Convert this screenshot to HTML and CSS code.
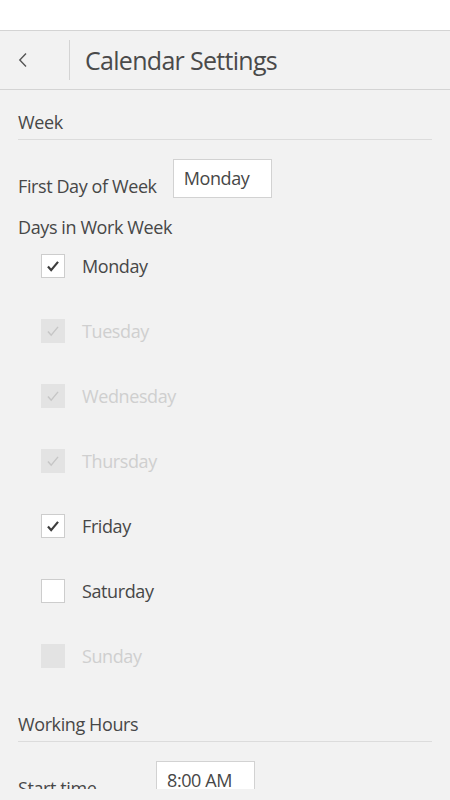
FILE: index.html
```html
<html lang="en">
  <head>
    <title>Calendar Settings</title>
    <meta charset="utf-8">
    <meta name="viewport" content="width=device-width, initial-scale=1.0">
    <link rel="stylesheet" href="styles.css">
  </head>
  <body>
    <div class="status"></div>

    <header class="topbar">
      <button class="topbar__back" aria-label="Back">
        <svg width="10" height="16" viewBox="0 0 10 16"><path d="M8 1.5 L1.8 8 L8 14.5" fill="none" stroke="#555" stroke-width="1.4"/></svg>
      </button>
      <span class="topbar__sep"></span>
      <h1 class="topbar__title">Calendar Settings</h1>
    </header>

    <main class="settings">
      <section class="group">
        <h2 class="group__title">Week</h2>

        <div class="field">
          <span class="field__label">First Day of Week</span>
          <div class="select">Monday</div>
        </div>

        <p class="group__label">Days in Work Week</p>

        <ul class="days">
          <li class="day day--on"><span class="box"><svg viewBox="0 0 24 24"><path d="M6.5 12.5 L10 16.5 L17.5 7.5"/></svg></span>Monday</li>
          <li class="day day--on day--off"><span class="box"><svg viewBox="0 0 24 24"><path d="M6.5 12.5 L10 16.5 L17.5 7.5"/></svg></span>Tuesday</li>
          <li class="day day--on day--off"><span class="box"><svg viewBox="0 0 24 24"><path d="M6.5 12.5 L10 16.5 L17.5 7.5"/></svg></span>Wednesday</li>
          <li class="day day--on day--off"><span class="box"><svg viewBox="0 0 24 24"><path d="M6.5 12.5 L10 16.5 L17.5 7.5"/></svg></span>Thursday</li>
          <li class="day day--on"><span class="box"><svg viewBox="0 0 24 24"><path d="M6.5 12.5 L10 16.5 L17.5 7.5"/></svg></span>Friday</li>
          <li class="day"><span class="box"></span>Saturday</li>
          <li class="day day--off"><span class="box"></span>Sunday</li>
        </ul>
      </section>

      <section class="group">
        <h2 class="group__title">Working Hours</h2>

        <div class="field field--time">
          <span class="field__label">Start time</span>
          <div class="select">8:00 AM</div>
        </div>
      </section>
    </main>
  </body>
</html>
```

FILE: styles.css
```css
html, body {
  margin: 0;
  padding: 0;
}

body {
  height: 800px;
  overflow: hidden;
  background-color: #f2f2f2;
  color: #474747;
  font-family: "Open Sans", "Noto Sans", sans-serif;
  font-size: 18px;
  letter-spacing: -0.4px;
}

.status {
  height: 30px;
  background-color: #fff;
  border-bottom: 1px solid #d4d4d4;
}

.topbar {
  height: 58px;
  display: flex;
  align-items: center;
  border-bottom: 1px solid #d4d4d4;
}

.topbar__back {
  width: 69px;
  height: 100%;
  padding: 0 0 0 18px;
  border: 0;
  background: none;
  display: flex;
  align-items: center;
  justify-content: flex-start;
}

.topbar__sep {
  width: 1px;
  height: 40px;
  background-color: #d4d4d4;
}

.topbar__title {
  margin: 0 0 0 15px;
  font-size: 25px;
  font-weight: 400;
  letter-spacing: -0.7px;
  color: #4a4a4a;
}

.settings {
  height: 699px;
  overflow: hidden;
  padding: 0 18px;
}

.group__title {
  margin: 0;
  padding: 20px 0 5px;
  font-size: 18px;
  font-weight: 400;
  line-height: 24px;
  border-bottom: 1px solid #dcdcdc;
}

.group__title + .field {
  margin-top: 19px;
}

.field {
  display: flex;
  align-items: flex-end;
}

.field__label {
  line-height: 24px;
  margin-bottom: 0;
}

.select {
  margin-left: 16px;
  width: 87px;
  height: 37px;
  padding: 0 0 0 10px;
  border: 1px solid #d2d2d2;
  background-color: #fff;
  line-height: 36px;
}

.field--time .field__label {
  width: 138px;
}

.field--time .select {
  margin-left: 0;
}

.group__label {
  margin: 17px 0 0;
  line-height: 24px;
}

.days {
  list-style-type: none;
  margin: 0;
  padding: 0 0 0 23px;
}

.day {
  height: 65px;
  display: flex;
  align-items: center;
}

.days .day:first-child {
  margin-top: -6px;
}

.box {
  width: 22px;
  height: 22px;
  margin-right: 17px;
  border: 1px solid #cdcdcd;
  background-color: #fff;
}

.box svg {
  display: block;
  width: 22px;
  height: 22px;
}

.box path {
  fill: none;
  stroke: #3c3c3c;
  stroke-width: 2.4;
}

.day--off {
  color: #cfcfcf;
}

.day--off .box {
  border-color: #e3e3e3;
  background-color: #e3e3e3;
}

.day--off .box path {
  stroke: #c6c6c6;
  stroke-width: 1.6;
}

.group + .group .group__title {
  padding-top: 24px;
}
```
